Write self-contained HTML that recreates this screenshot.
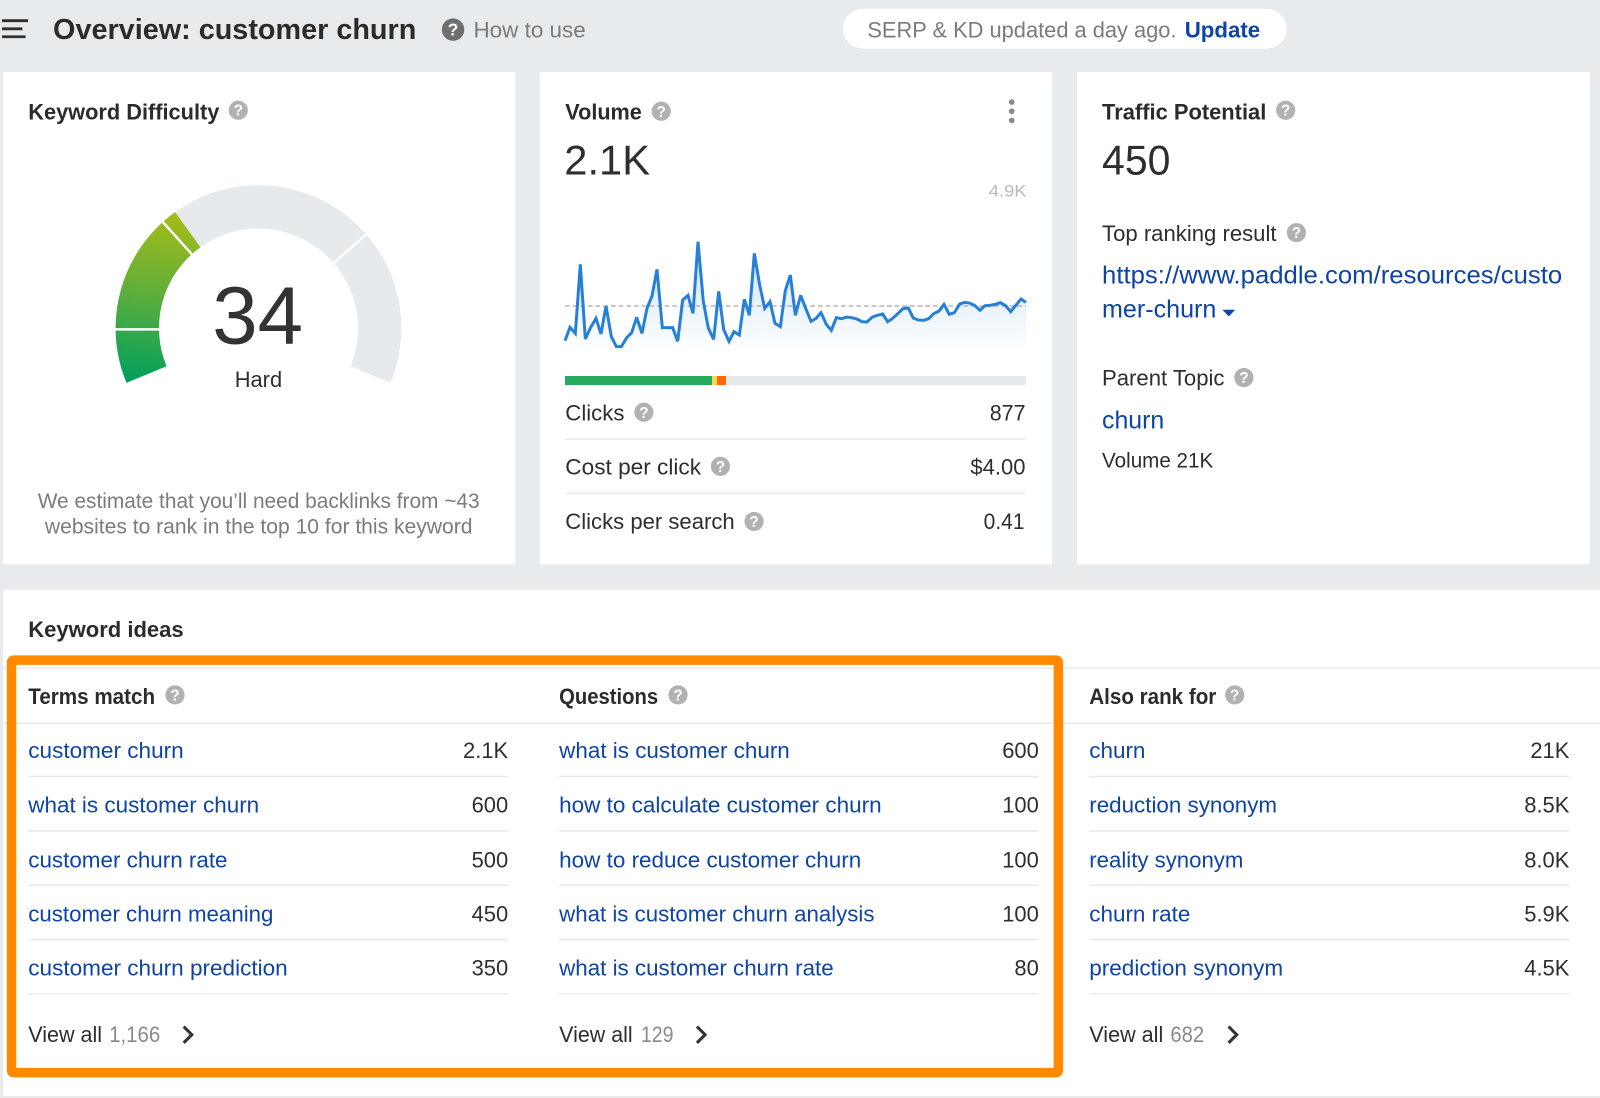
<!DOCTYPE html>
<html lang="en">
<head>
<meta charset="utf-8">
<title>Overview: customer churn</title>
<style>
html,body{margin:0;padding:0;background:#e8ebee;width:1600px;height:1098px;overflow:hidden}
svg{display:block}
text{font-family:"Liberation Sans",Arial,sans-serif;fill:#2e2e2e;font-size:21.5px}
.b{font-weight:700;fill:#2b2b2b}
.l{fill:#0e44a4}
.g{fill:#7b7b7b}
.q{fill:#fff;font-weight:700;font-size:15px;text-anchor:middle}
.r{text-anchor:end}
.ln{stroke:#e9e9e9;stroke-width:1.5}
</style>
</head>
<body>
<svg width="1600" height="1098" viewBox="0 0 1568 1076" xmlns="http://www.w3.org/2000/svg">
<defs>
<linearGradient id="ga" gradientUnits="userSpaceOnUse" x1="160" y1="378" x2="185" y2="212">
<stop offset="0" stop-color="#00a05c"/><stop offset=".5" stop-color="#5cae3c"/><stop offset="1" stop-color="#a6bc16"/>
</linearGradient>
<linearGradient id="ar" x1="0" y1="0" x2="0" y2="1">
<stop offset="0" stop-color="#2680d8" stop-opacity=".24"/><stop offset="1" stop-color="#2680d8" stop-opacity="0"/>
</linearGradient>
<g id="qm"><circle r="9.4" fill="#b1b1b1"/><text class="q" y="5.4">?</text></g>
</defs>

<rect width="1568" height="1076" fill="#e8ebee"/>

<!-- header -->
<path d="M2 20.3H27.5M2 28.2H22M2 36H25" stroke="#2f2f2f" stroke-width="2.8" fill="none"/>
<text class="b" x="52" y="38" style="font-size:28px" textLength="356" lengthAdjust="spacingAndGlyphs">Overview: customer churn</text>
<circle cx="444" cy="29" r="11" fill="#6f6f6f"/><text class="q" x="444" y="35" style="font-size:17px">?</text>
<text class="g" x="464" y="36.5" style="font-size:22px" textLength="110" lengthAdjust="spacingAndGlyphs">How to use</text>
<rect x="826" y="9.3" width="435" height="39" rx="19.5" fill="#dfe2e5"/>
<rect x="826" y="8.7" width="435" height="39" rx="19.5" fill="#fff"/>
<text class="g" x="850" y="36.5" style="font-size:22px" textLength="303" lengthAdjust="spacingAndGlyphs">SERP &amp; KD updated a day ago.</text>
<text class="l" x="1161" y="36.5" style="font-size:22px;font-weight:700" textLength="74" lengthAdjust="spacingAndGlyphs">Update</text>

<!-- cards -->
<rect x="3" y="70.5" width="502" height="482.5" fill="#fff"/>
<rect x="529" y="70.5" width="502" height="482.5" fill="#fff"/>
<rect x="1055.5" y="70.5" width="502.5" height="482.5" fill="#fff"/>

<!-- Keyword Difficulty -->
<text class="b" x="27.7" y="117" textLength="187.3" lengthAdjust="spacingAndGlyphs">Keyword Difficulty</text>
<use href="#qm" x="233.5" y="108"/>
<g transform="translate(0 -.8)">
<path d="M143.6 367.8A118.75 118.75 0 1 1 363 367.8" fill="none" stroke="#e7eaed" stroke-width="42.5"/>
<path d="M143.6 367.8A118.75 118.75 0 1 1 363 367.8" pathLength="225" fill="none" stroke="url(#ga)" stroke-width="42.5" stroke-dasharray="76.8 400"/>
<path d="M158.3 323.6H111M189.7 251.8L158.3 216.9M325 260.1L360.5 229.2" stroke="#fff" stroke-width="2.4" fill="none"/>
</g>
<text x="208" y="336.5" style="font-size:80px;fill:#333" textLength="89" lengthAdjust="spacingAndGlyphs">34</text>
<text x="230" y="379" textLength="46.5" lengthAdjust="spacingAndGlyphs">Hard</text>
<text class="g" x="37" y="498" style="font-size:20.5px" textLength="433" lengthAdjust="spacingAndGlyphs">We estimate that you’ll need backlinks from ~43</text>
<text class="g" x="44" y="523" style="font-size:20.5px" textLength="419" lengthAdjust="spacingAndGlyphs">websites to rank in the top 10 for this keyword</text>

<!-- Volume -->
<text class="b" x="554" y="117" textLength="75" lengthAdjust="spacingAndGlyphs">Volume</text>
<use href="#qm" x="648" y="109"/>
<circle cx="991.5" cy="100" r="2.8" fill="#8a8a8a"/><circle cx="991.5" cy="109" r="2.8" fill="#8a8a8a"/><circle cx="991.5" cy="118" r="2.8" fill="#8a8a8a"/>
<text x="553" y="171" style="font-size:41px" textLength="84" lengthAdjust="spacingAndGlyphs">2.1K</text>
<text x="969" y="192.5" style="font-size:16.5px;fill:#b9b9b9" textLength="37" lengthAdjust="spacingAndGlyphs">4.9K</text>

<g transform="scale(.98) translate(550 170) scale(.33333)">
<polygon fill="url(#ar)" points="45,550 45,512 60,472 76,490 91,283 106,507 122,472 138,445 153,492 168,408 184,500 199,530 214,530 230,503 245,488 260,442 276,490 291,415 306,378 321,298 337,473 352,473 368,473 383,514 398,390 414,376 429,430 444,215 460,395 475,474 491,508 506,364 521,478 537,514 552,485 568,495 583,388 598,436 613,250 629,345 644,415 660,395 675,460 691,470 706,362 721,315 736,436 752,376 767,415 783,454 798,445 813,428 829,463 844,481 859,443 875,446 890,441 905,443 921,447 936,455 951,456 967,441 982,436 998,432 1013,455 1028,445 1059,416 1075,414 1090,444 1105,450 1121,451 1136,446 1151,431 1167,423 1182,403 1198,433 1213,428 1229,402 1244,397 1259,399 1275,407 1290,421 1305,407 1320,406 1336,403 1351,398 1367,407 1382,425 1413,387 1428,397 1428,550"/>
<path d="M45 408H1428" stroke="#a8a8a8" stroke-width="4" stroke-dasharray="14 9" fill="none"/>
<polyline fill="none" stroke="#2680d8" stroke-width="9" stroke-linejoin="miter" stroke-miterlimit="3" points="45,512 60,472 76,490 91,283 106,507 122,472 138,445 153,492 168,408 184,500 199,530 214,530 230,503 245,488 260,442 276,490 291,415 306,378 321,298 337,473 352,473 368,473 383,514 398,390 414,376 429,430 444,215 460,395 475,474 491,508 506,364 521,478 537,514 552,485 568,495 583,388 598,436 613,250 629,345 644,415 660,395 675,460 691,470 706,362 721,315 736,436 752,376 767,415 783,454 798,445 813,428 829,463 844,481 859,443 875,446 890,441 905,443 921,447 936,455 951,456 967,441 982,436 998,432 1013,455 1028,445 1059,416 1075,414 1090,444 1105,450 1121,451 1136,446 1151,431 1167,423 1182,403 1198,433 1213,428 1229,402 1244,397 1259,399 1275,407 1290,421 1305,407 1320,406 1336,403 1351,398 1367,407 1382,425 1413,387 1428,397"/>
<rect x="45" y="618" width="1383" height="27" fill="#e7eaed"/>
<rect x="45" y="618" width="441" height="27" fill="#27a85f"/>
<rect x="486" y="618" width="15" height="27" fill="#f6d85e"/>
<rect x="501" y="618" width="27" height="27" fill="#ff6a0a"/>
</g>

<text x="554" y="412" textLength="58" lengthAdjust="spacingAndGlyphs">Clicks</text>
<use href="#qm" x="631" y="404"/>
<text x="970" y="412" textLength="35" lengthAdjust="spacingAndGlyphs">877</text>
<path class="ln" d="M554 430.5H1005"/>
<text x="554" y="465" textLength="133" lengthAdjust="spacingAndGlyphs">Cost per click</text>
<use href="#qm" x="706" y="457"/>
<text x="951" y="465" textLength="54" lengthAdjust="spacingAndGlyphs">$4.00</text>
<path class="ln" d="M554 483.5H1005"/>
<text x="554" y="518.5" textLength="166" lengthAdjust="spacingAndGlyphs">Clicks per search</text>
<use href="#qm" x="739" y="511"/>
<text x="964" y="518.5" textLength="40" lengthAdjust="spacingAndGlyphs">0.41</text>

<!-- Traffic Potential -->
<text class="b" x="1080" y="117" textLength="161" lengthAdjust="spacingAndGlyphs">Traffic Potential</text>
<use href="#qm" x="1260" y="108"/>
<text x="1080" y="171" style="font-size:41px" textLength="67" lengthAdjust="spacingAndGlyphs">450</text>
<text x="1080" y="236" textLength="171" lengthAdjust="spacingAndGlyphs">Top ranking result</text>
<use href="#qm" x="1270.5" y="228"/>
<text class="l" x="1080" y="278" style="font-size:24.5px" textLength="451" lengthAdjust="spacingAndGlyphs">https://www.paddle.com/resources/custo</text>
<text class="l" x="1080" y="311" style="font-size:24.5px" textLength="112" lengthAdjust="spacingAndGlyphs">mer-churn</text>
<path d="M1198 303.5H1210.5L1204.2 310Z" fill="#0e44a4"/>
<text x="1080" y="378" textLength="120" lengthAdjust="spacingAndGlyphs">Parent Topic</text>
<use href="#qm" x="1219" y="370"/>
<text class="l" x="1080" y="420" style="font-size:24.5px" textLength="61" lengthAdjust="spacingAndGlyphs">churn</text>
<text x="1080" y="458" style="font-size:20.5px" textLength="109" lengthAdjust="spacingAndGlyphs">Volume 21K</text>

<!-- Keyword ideas -->
<rect x="3" y="578" width="1565" height="496" fill="#fff"/>
<text class="b" x="27.7" y="624" textLength="152.3" lengthAdjust="spacingAndGlyphs">Keyword ideas</text>
<path class="ln" d="M3 654.7H1568M3 708.7H1568"/>

<text class="b" x="27.7" y="690" textLength="124.3" lengthAdjust="spacingAndGlyphs">Terms match</text>
<use href="#qm" x="171.5" y="681"/>
<text class="b" x="548" y="690" textLength="97" lengthAdjust="spacingAndGlyphs">Questions</text>
<use href="#qm" x="664.5" y="681"/>
<text class="b" x="1067.5" y="690" textLength="124.5" lengthAdjust="spacingAndGlyphs">Also rank for</text>
<use href="#qm" x="1210" y="681"/>

<!-- column 1 -->
<text class="l" x="27.7" y="743" textLength="152.3" lengthAdjust="spacingAndGlyphs">customer churn</text><text class="r" x="498" y="743">2.1K</text>
<text class="l" x="27.7" y="796" textLength="226.3" lengthAdjust="spacingAndGlyphs">what is customer churn</text><text class="r" x="498" y="796">600</text>
<text class="l" x="27.7" y="850" textLength="195.3" lengthAdjust="spacingAndGlyphs">customer churn rate</text><text class="r" x="498" y="850">500</text>
<text class="l" x="27.7" y="903" textLength="240.3" lengthAdjust="spacingAndGlyphs">customer churn meaning</text><text class="r" x="498" y="903">450</text>
<text class="l" x="27.7" y="956" textLength="254.3" lengthAdjust="spacingAndGlyphs">customer churn prediction</text><text class="r" x="498" y="956">350</text>
<path class="ln" d="M28 761H498M28 814.3H498M28 867.5H498M28 920.8H498M28 974H498"/>
<text x="27.7" y="1021" textLength="72.3" lengthAdjust="spacingAndGlyphs">View all</text>
<text class="g" x="107" y="1021" style="fill:#8a8a8a" textLength="50" lengthAdjust="spacingAndGlyphs">1,166</text>
<path d="M180 1006L188 1014L180 1022" fill="none" stroke="#333" stroke-width="3"/>

<!-- column 2 -->
<text class="l" x="548" y="743" textLength="226" lengthAdjust="spacingAndGlyphs">what is customer churn</text><text class="r" x="1018" y="743">600</text>
<text class="l" x="548" y="796" textLength="316" lengthAdjust="spacingAndGlyphs">how to calculate customer churn</text><text class="r" x="1018" y="796">100</text>
<text class="l" x="548" y="850" textLength="296" lengthAdjust="spacingAndGlyphs">how to reduce customer churn</text><text class="r" x="1018" y="850">100</text>
<text class="l" x="548" y="903" textLength="309" lengthAdjust="spacingAndGlyphs">what is customer churn analysis</text><text class="r" x="1018" y="903">100</text>
<text class="l" x="548" y="956" textLength="269" lengthAdjust="spacingAndGlyphs">what is customer churn rate</text><text class="r" x="1018" y="956">80</text>
<path class="ln" d="M548 761H1018M548 814.3H1018M548 867.5H1018M548 920.8H1018M548 974H1018"/>
<text x="548" y="1021" textLength="72" lengthAdjust="spacingAndGlyphs">View all</text>
<text class="g" x="628" y="1021" style="fill:#8a8a8a" textLength="32" lengthAdjust="spacingAndGlyphs">129</text>
<path d="M683 1006L691 1014L683 1022" fill="none" stroke="#333" stroke-width="3"/>

<!-- column 3 -->
<text class="l" x="1067.5" y="743" textLength="55" lengthAdjust="spacingAndGlyphs">churn</text><text class="r" x="1538" y="743">21K</text>
<text class="l" x="1067.5" y="796" textLength="184" lengthAdjust="spacingAndGlyphs">reduction synonym</text><text class="r" x="1538" y="796">8.5K</text>
<text class="l" x="1067.5" y="850" textLength="151" lengthAdjust="spacingAndGlyphs">reality synonym</text><text class="r" x="1538" y="850">8.0K</text>
<text class="l" x="1067.5" y="903" textLength="99" lengthAdjust="spacingAndGlyphs">churn rate</text><text class="r" x="1538" y="903">5.9K</text>
<text class="l" x="1067.5" y="956" textLength="190" lengthAdjust="spacingAndGlyphs">prediction synonym</text><text class="r" x="1538" y="956">4.5K</text>
<path class="ln" d="M1067.5 761H1538M1067.5 814.3H1538M1067.5 867.5H1538M1067.5 920.8H1538M1067.5 974H1538"/>
<text x="1067.5" y="1021" textLength="72.5" lengthAdjust="spacingAndGlyphs">View all</text>
<text class="g" x="1147" y="1021" style="fill:#8a8a8a" textLength="33" lengthAdjust="spacingAndGlyphs">682</text>
<path d="M1204 1006L1212 1014L1204 1022" fill="none" stroke="#333" stroke-width="3"/>

<!-- highlight -->
<rect x="11.3" y="646.9" width="1025.9" height="404.3" rx="2" fill="none" stroke="#ff8a00" stroke-width="9.3"/>
</svg>
</body>
</html>
